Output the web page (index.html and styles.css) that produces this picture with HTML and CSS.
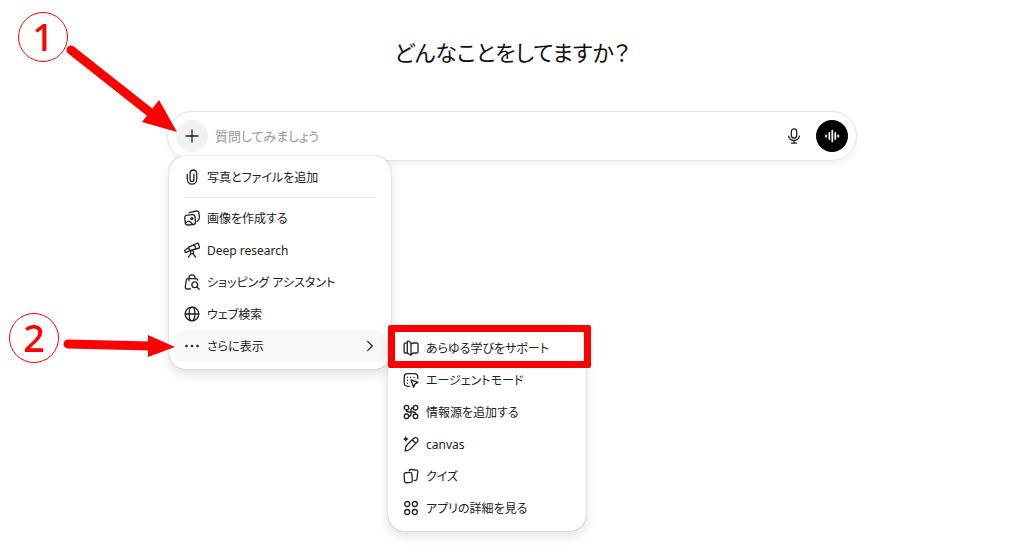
FILE: index.html
```html
<!DOCTYPE html>
<html lang="ja">
<head>
    <meta charset="UTF-8">
    <meta name="viewport" content="width=device-width, initial-scale=1.0">
    <title>どんなことをしてますか？</title>

    <link rel="stylesheet" href="styles.css">
</head>
<body>
    <main>
        <h1>どんなことをしてますか？</h1>

        <div class="composer-area">
            <form class="composer">
                <button type="button" class="round-button add-button" aria-label="追加">
                    <svg class="icon" viewBox="0 0 16 16"><path d="M8 2v12M2 8h12"/></svg>
                </button>
                <input type="text" placeholder="質問してみましょう" aria-label="質問">
                <button type="button" class="mic-button" aria-label="音声入力">
                    <svg class="icon" viewBox="0 0 16 16"><rect x="5.3" y="0.8" width="5.4" height="9.2" rx="2.7"/><path d="M2.6 8.2c.5 2.7 2.600 4.300 5.400 4.300s4.900-1.600 5.400-4.300M8 12.500v2.600M5.500 15.200h5"/></svg>
                </button>
                <button type="button" class="round-button voice-button" aria-label="音声モード">
                    <svg class="icon" viewBox="0 0 16 16"><path d="M2 7.300v1.400M5.300 5v6M8.300 2.700v10.600M11.300 5v6M14.300 7.300v1.400"/></svg>
                </button>
            </form>

            <ul class="menu main-menu">
                <li><button type="button">
                    <svg class="icon" viewBox="0 0 16 16"><path d="M3.300 5.500v5a4.700 4.700 0 0 0 9.400 0V4.300a3.300 3.300 0 0 0-6.600 0v6.200a1.900 1.900 0 0 0 3.800 0V5.200"/></svg>
                    写真とファイルを追加
                </button></li>
                <li class="separator"></li>
                <li><button type="button">
                    <svg class="icon" viewBox="0 0 16 16"><path d="M5.300 2.700 12.400 1c1.300-.3 2.300.3 2.500 1.500l.5 4.700c.1 1.800-.7 3.300-2.300 4.300"/><rect x="1" y="4.800" width="10.300" height="10" rx="2.600" transform="rotate(-5 6 10)"/><path d="m1.600 13 2-1.500c.8-.5 1.600-.4 2.300.2l3 2.700"/><circle cx="7.800" cy="8.600" r="1"/></svg>
                    画像を作成する
                </button></li>
                <li><button type="button">
                    <svg class="icon" viewBox="0 0 16 16"><path d="m10.400 2.500 2.900-1.300c.5-.2.900 0 1.100.5l1.100 3.500c.2.500 0 .9-.5 1l-3.200.8zM10.400 2.600 4.600 5.200l1.200 3.500 6-1.700M4.700 5.500 1.100 8c-.4.300-.5.600-.3 1l.4.900c.2.500.5.600 1 .5l3.600-1.700"/><circle cx="8" cy="10.200" r="1.600"/><path d="m6.900 11.500-2.400 3.700M9.100 11.500l2.400 3.700"/></svg>
                    Deep research
                </button></li>
                <li><button type="button">
                    <svg class="icon" viewBox="0 0 16 16"><path d="M6.500 15H3.500C2 15 1.100 14.200 1.300 12.800l.9-6.500C2.300 5.200 3 4.600 4.200 4.600h7.600c1.100 0 1.800.5 2 1.500M4.900 6.800V3.900a3.100 3.100 0 0 1 6.200 0v1"/><circle cx="10.800" cy="10.800" r="2.900"/><path d="m13 13 2.200 2.200"/></svg>
                    ショッピング アシスタント
                </button></li>
                <li><button type="button">
                    <svg class="icon" viewBox="0 0 16 16"><circle cx="8" cy="8" r="6.800"/><ellipse cx="8" cy="8" rx="2.900" ry="6.800"/><path d="M1.200 8h13.600"/></svg>
                    ウェブ検索
                </button></li>
                <li><button type="button" class="active" aria-expanded="true">
                    <svg class="icon dots" viewBox="0 0 16 16"><circle cx="2.500" cy="8" r="1.300"/><circle cx="8" cy="8" r="1.300"/><circle cx="13.500" cy="8" r="1.300"/></svg>
                    さらに表示
                    <svg class="icon chevron" viewBox="0 0 16 16"><path d="m5.700 3.400 4.600 4.600-4.600 4.600"/></svg>
                </button></li>
            </ul>

            <ul class="menu sub-menu">
                <li><button type="button">
                    <svg class="icon" viewBox="0 0 16 16"><path d="M4.300 12.800 2.500 13c-.9.100-1.400-.3-1.400-1.200V4.500c0-.7.300-1.100 1-1.300l2.200-.6M8 15.200l-2.700-1.500c-.7-.4-1-.8-1-1.600V2.200c0-1 .8-1.400 1.600-.9L7 2c.7.400 1 .9 1 1.700zM8 4.500c.5-1 1.300-1.500 2.500-1.500h3.100c.9 0 1.400.5 1.400 1.400v7.300c0 .9-.5 1.300-1.400 1.300h-2.800c-1.300 0-2.200.6-2.800 2.200"/></svg>
                    あらゆる学びをサポート
                </button></li>
                <li><button type="button">
                    <svg class="icon" viewBox="0 0 16 16"><path d="M6.300 14.300H4.800c-2.200 0-3.600-1.300-3.600-3.500V5.200c0-2.200 1.400-3.500 3.600-3.500h6.400c2.200 0 3.600 1.300 3.600 3.500v1.500"/><path d="m8 7.800 7 2.600-3 1.500-1.500 3.200z"/><path d="M4.500 5.200v.1M7.600 5.200v.1M11 5.200v.1M4.500 8.200v.1M4.500 11.200v.1"/></svg>
                    エージェントモード
                </button></li>
                <li><button type="button">
                    <svg class="icon" viewBox="0 0 16 16"><circle cx="3.500" cy="3.700" r="2.300"/><circle cx="12.500" cy="3.700" r="2.300"/><circle cx="3.500" cy="12.300" r="2.300"/><circle cx="12.500" cy="12.300" r="2.300"/><path d="M10.200 3.700C8.600 3.700 8 4.600 8 6v4c0 1.500-.7 2.300-2.200 2.300M3.500 6c0 1.300.6 2 2 2h5c1.400 0 2 .7 2 2"/></svg>
                    情報源を追加する
                </button></li>
                <li><button type="button">
                    <svg class="icon" viewBox="0 0 16 16"><path d="m5.600 7.200 4.900-4.700c1.300-1.200 2.600-1.200 3.700-.1s1.100 2.500-.1 3.700l-7 7c-.7.7-1.400 1-2.300 1.200l-2.600.5.500-3.400c.1-1 .5-1.700 1.200-2.400zM9.300 3.800l3.500 3.500"/><path class="spark" d="m2.800.1 1 2 2 .9-2 .9-1 2-1-2-2-.9 2-.9z"/></svg>
                    canvas
                </button></li>
                <li><button type="button">
                    <svg class="icon" viewBox="0 0 16 16"><rect x="1.300" y="4.600" width="7.800" height="10" rx="1.700" transform="rotate(-4 5 9.500)"/><path d="M6.200 2.600c.2-.8.800-1.200 1.700-1.100l5.500.6c1 .1 1.500.7 1.400 1.700l-.9 7.200c-.1 1-.7 1.500-1.600 1.400l-1.200-.1"/></svg>
                    クイズ
                </button></li>
                <li><button type="button">
                    <svg class="icon" viewBox="0 0 16 16"><circle cx="4.200" cy="4" r="2.500"/><circle cx="11.800" cy="4" r="2.500"/><circle cx="4.200" cy="12" r="2.500"/><circle cx="11.800" cy="12" r="2.500"/></svg>
                    アプリの詳細を見る
                </button></li>
            </ul>

            <!-- 手順の注釈 -->
            <span class="step step-one">1</span>
            <svg class="arrow arrow-one" viewBox="0 0 120 100"><path d="M11 10 92 74"/><polygon points="99,60 117,92 82,82"/></svg>
            <span class="step step-two">2</span>
            <svg class="arrow arrow-two" viewBox="0 0 120 30"><path d="M8 14 90 16"/><polygon points="88,5 115,17 88,27"/></svg>
            <div class="highlight"></div>
        </div>
    </main>
</body>
</html>
```
FILE: styles.css
```css
* {
    box-sizing: border-box;
}

body {
    margin: 0;
    background-color: #fff;
    color: #222;
    font-family: "Noto Sans", "Noto Sans CJK JP", sans-serif;
    font-feature-settings: "palt";
}

main {
    max-width: 690px;
    min-height: 100vh;
    margin: 0 auto;
    padding-top: 32px;
}

h1 {
    margin: 0 0 39px;
    font-size: 22px;
    font-weight: 400;
    line-height: 40px;
    text-align: center;
    color: #111;
}

button,
input {
    font: inherit;
    font-feature-settings: inherit;
    color: inherit;
    border: none;
    background: none;
    padding: 0;
}

button {
    cursor: pointer;
}

.icon {
    width: 16px;
    height: 16px;
    flex: none;
    fill: none;
    stroke: #222;
    stroke-width: 1.3;
    stroke-linecap: round;
    stroke-linejoin: round;
}

.composer-area {
    position: relative;
}

.composer {
    display: flex;
    align-items: center;
    padding: 8px;
    border: 1px solid #e4e4e4;
    border-radius: 26px;
    box-shadow: 0 3px 6px rgba(0, 0, 0, 0.06);
}

.composer input {
    flex: 1;
    min-width: 0;
    margin-left: 7px;
    font-size: 13px;
    outline: none;
}

.composer input::placeholder {
    color: #999;
    opacity: 1;
}

.round-button,
.mic-button {
    display: flex;
    align-items: center;
    justify-content: center;
    height: 32px;
}

.round-button {
    width: 32px;
    border-radius: 50%;
}

.add-button {
    background-color: #f2f2f2;
}

.mic-button {
    margin-right: 14px;
}

.voice-button {
    background-color: #000;
}

.voice-button .icon {
    stroke: #fff;
    stroke-width: 1.8;
}

.menu {
    position: absolute;
    margin: 0;
    padding: 7px 5px;
    list-style: none;
    background-color: #fff;
    border-radius: 16px;
    box-shadow: 0 0 1px rgba(0, 0, 0, 0.5), 0 5px 12px rgba(0, 0, 0, 0.12);
}

.main-menu {
    top: 45px;
    left: 2px;
    width: 222px;
    padding-top: 5px;
}

.sub-menu {
    top: 214px;
    left: 221px;
    width: 198px;
}

.menu button {
    display: flex;
    align-items: center;
    gap: 7px;
    width: 100%;
    height: 32px;
    padding: 0 8px 0 10px;
    border-radius: 10px;
    font-size: 12px;
    text-align: left;
    white-space: nowrap;
}

.menu .active {
    background-color: #f8f8f8;
}

.menu .dots,
.menu .spark {
    fill: #222;
    stroke: none;
}

.chevron {
    margin-left: auto;
}

.separator {
    height: 1px;
    margin: 4px 10px;
    background-color: #e5e5e5;
}

.step {
    position: absolute;
    width: 50px;
    height: 50px;
    border: 1px solid #f00;
    border-radius: 50%;
    color: #f00;
    font-size: 38px;
    font-weight: 500;
    line-height: 46px;
    text-align: center;
}

.step-one {
    top: -99px;
    left: -149px;
}

.step-two {
    top: 202px;
    left: -158px;
}

.arrow {
    position: absolute;
    width: 120px;
    fill: #f00;
}

.arrow path {
    stroke: #f00;
    stroke-width: 9;
    stroke-linecap: round;
}

.arrow-one {
    top: -71px;
    left: -107px;
    height: 100px;
}

.arrow-two {
    top: 219px;
    left: -107px;
    height: 30px;
}

.highlight {
    position: absolute;
    top: 214px;
    left: 221px;
    width: 203px;
    height: 43px;
    border: 7px solid #f00;
    border-radius: 2px;
}
```
